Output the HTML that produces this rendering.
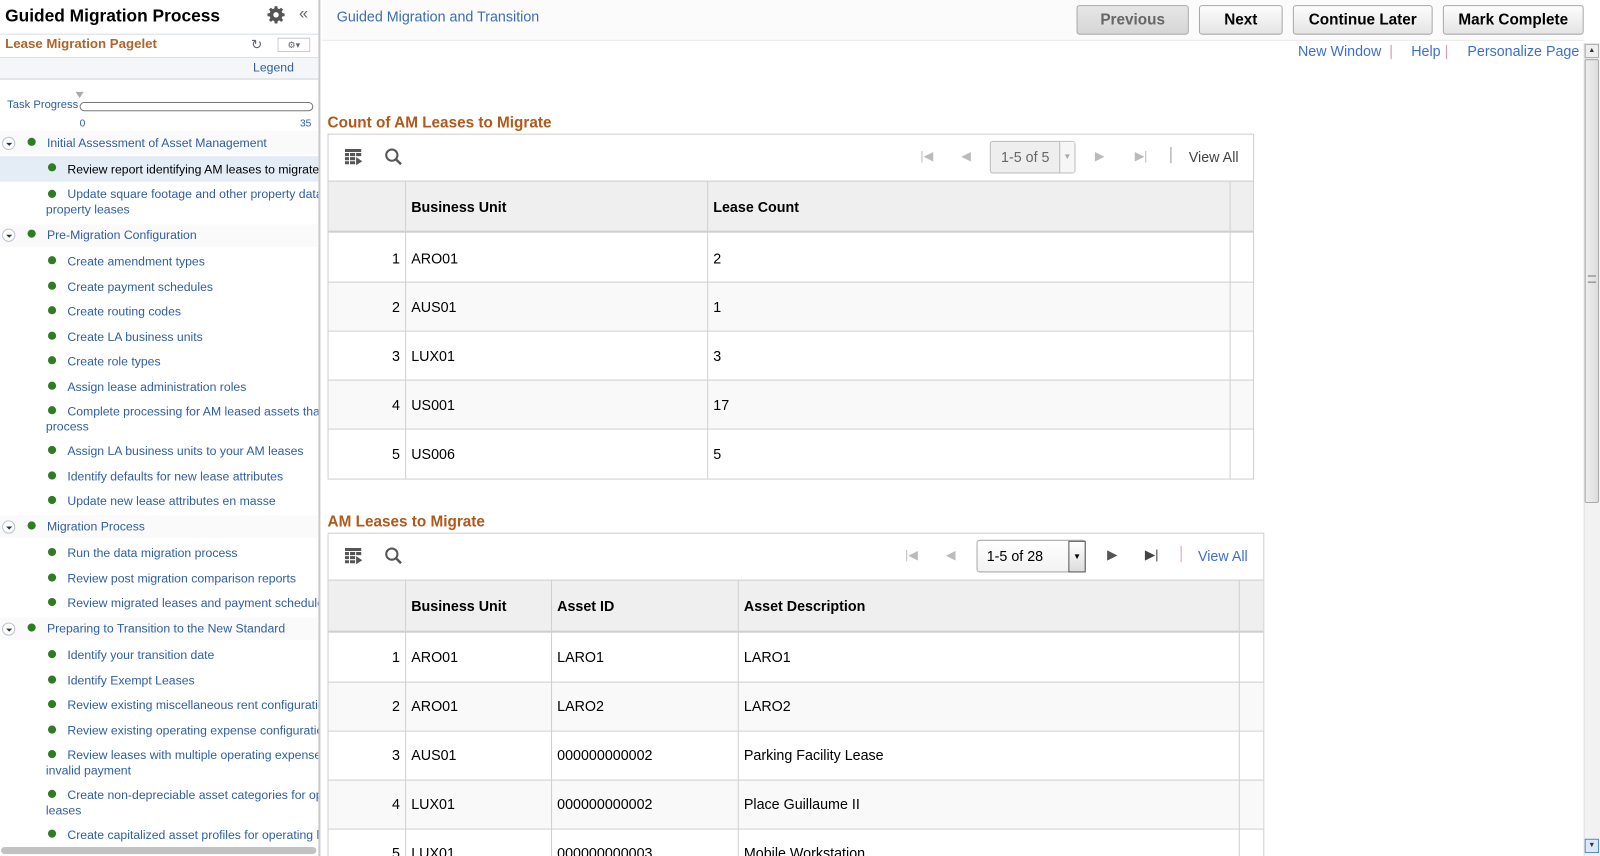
<!DOCTYPE html>
<html><head><meta charset="utf-8"><style>
*{box-sizing:border-box;margin:0;padding:0}
html,body{width:1600px;height:856px;overflow:hidden;background:#fff;font-family:"Liberation Sans",Arial,sans-serif}
#w{position:absolute;left:0;top:0;width:1568px;height:839px;transform:scale(1.020408);transform-origin:0 0;overflow:hidden}
.a{position:absolute;white-space:nowrap}
#left{position:absolute;left:0;top:0;width:314px;height:839px;border-right:2px solid #c9c9c9;overflow:hidden}
.it{position:absolute;left:0;width:312px;font-size:12px;color:#2e5ea7;line-height:15px}
.dot{position:absolute;width:8px;height:8px;border-radius:50%;background:#2e7d22}
.tg{position:absolute;left:2px;width:13px;height:13px;border:1px solid #b9c3d0;border-radius:50%;background:#fff}
.tg:after{content:"";position:absolute;left:3px;top:5px;border-left:3px solid transparent;border-right:3px solid transparent;border-top:3px solid #333}
.btn{position:absolute;top:5px;height:29px;border:1px solid #a8a8a8;border-radius:3px;background:linear-gradient(#fdfdfd,#e4e4e4);font-weight:bold;font-size:15px;text-align:center;line-height:27px;color:#000}
.lnk{color:#3d6ed6;font-size:14px}
.tb{position:absolute;border:1px solid #cfcfcf;background:#fff}
.cell{position:absolute;font-size:14px;color:#000}
.hl{position:absolute;background:#d0d0d0}
</style></head><body><div id="w">
<div id="left">
 <div class="a" style="left:5px;top:6px;font-size:17px;font-weight:bold;color:#000">Guided Migration Process</div>
 <svg class="a" style="left:262px;top:6px" width="17" height="17" viewBox="0 0 16 16"><path fill="#555" d="M6.8 0h2.4l.4 2.2 1.4.6 1.8-1.3 1.7 1.7-1.3 1.8.6 1.4 2.2.4v2.4l-2.2.4-.6 1.4 1.3 1.8-1.7 1.7-1.8-1.3-1.4.6-.4 2.2H6.8l-.4-2.2-1.4-.6-1.8 1.3-1.7-1.7 1.3-1.8-.6-1.4L0 9.2V6.8l2.2-.4.6-1.4-1.3-1.8 1.7-1.7 1.8 1.3 1.4-.6z"/><circle cx="8" cy="8" r="2.5" fill="#fff"/></svg>
 <div class="a" style="left:293px;top:5px;font-size:16px;color:#666">«</div>
 <div class="a" style="left:0;top:33px;width:312px;height:24px;border-top:1px solid #d6dde6;border-bottom:1px solid #d6dde6"></div>
 <div class="a" style="left:5px;top:35px;font-size:13px;font-weight:bold;color:#b1642a">Lease Migration Pagelet</div>
 <div class="a" style="left:246px;top:36px;font-size:13px;color:#667">&#x21bb;</div>
 <div class="a" style="left:272px;top:37px;width:32px;height:14px;border:1px solid #ccc;font-size:9px;color:#666;text-align:center;line-height:12px">⚙▾</div>
 <div class="a" style="left:0;top:57px;width:312px;height:21px;background:#f4f6f9;border-bottom:1px solid #cfd3d8"></div>
 <div class="a" style="left:248px;top:59px;font-size:12px;color:#2e5ea7">Legend</div>
 <div class="a" style="left:74px;top:90px;border-left:4px solid transparent;border-right:4px solid transparent;border-top:6px solid #aaa"></div>
 <div class="a" style="left:7px;top:97px;font-size:11px;color:#2e5ea7">Task Progress</div>
 <div class="a" style="left:78px;top:100px;width:229px;height:9px;border:1px solid #777;border-radius:5px"></div>
 <div class="a" style="left:78px;top:116px;font-size:10px;color:#2e5ea7">0</div>
 <div class="a" style="left:294px;top:116px;font-size:10px;color:#2e5ea7">35</div>
 <div class="a" style="left:0;top:129px;width:312px;border-top:1px solid #ddd"></div>
 <div class="it" style="top:129px;height:22px;background:#fafafa"><div class="tg" style="top:5px"></div><div class="dot" style="left:27px;top:6px"></div><span class="a" style="left:46px;top:4px">Initial Assessment of Asset Management</span></div>
 <div class="it" style="top:153px;height:25px;background:#e4ecf6"><div class="dot" style="left:47px;top:7px"></div><span class="a" style="left:66px;top:6px;color:#000">Review report identifying AM leases to migrate</span></div>
 <div class="it" style="top:182px"><div class="dot" style="left:47px;top:4px"></div><span class="a" style="left:66px;top:1px">Update square footage and other property data</span><span class="a" style="left:45px;top:16px">property leases</span></div>
 <div class="it" style="top:220px;height:22px;background:#fafafa"><div class="tg" style="top:4px"></div><div class="dot" style="left:27px;top:5px"></div><span class="a" style="left:46px;top:3px">Pre-Migration Configuration</span></div>
 <div class="it" style="top:249px"><div class="dot" style="left:47px;top:2px"></div><span class="a" style="left:66px;top:0">Create amendment types</span></div>
 <div class="it" style="top:274px"><div class="dot" style="left:47px;top:2px"></div><span class="a" style="left:66px;top:0">Create payment schedules</span></div>
 <div class="it" style="top:298px"><div class="dot" style="left:47px;top:2px"></div><span class="a" style="left:66px;top:0">Create routing codes</span></div>
 <div class="it" style="top:323px"><div class="dot" style="left:47px;top:2px"></div><span class="a" style="left:66px;top:0">Create LA business units</span></div>
 <div class="it" style="top:347px"><div class="dot" style="left:47px;top:2px"></div><span class="a" style="left:66px;top:0">Create role types</span></div>
 <div class="it" style="top:372px"><div class="dot" style="left:47px;top:2px"></div><span class="a" style="left:66px;top:0">Assign lease administration roles</span></div>
 <div class="it" style="top:396px"><div class="dot" style="left:47px;top:2px"></div><span class="a" style="left:66px;top:0">Complete processing for AM leased assets that</span><span class="a" style="left:45px;top:15px">process</span></div>
 <div class="it" style="top:435px"><div class="dot" style="left:47px;top:2px"></div><span class="a" style="left:66px;top:0">Assign LA business units to your AM leases</span></div>
 <div class="it" style="top:460px"><div class="dot" style="left:47px;top:2px"></div><span class="a" style="left:66px;top:0">Identify defaults for new lease attributes</span></div>
 <div class="it" style="top:484px"><div class="dot" style="left:47px;top:2px"></div><span class="a" style="left:66px;top:0">Update new lease attributes en masse</span></div>
 <div class="it" style="top:505px;height:22px;background:#fafafa"><div class="tg" style="top:5px"></div><div class="dot" style="left:27px;top:6px"></div><span class="a" style="left:46px;top:4px">Migration Process</span></div>
 <div class="it" style="top:535px"><div class="dot" style="left:47px;top:2px"></div><span class="a" style="left:66px;top:0">Run the data migration process</span></div>
 <div class="it" style="top:560px"><div class="dot" style="left:47px;top:2px"></div><span class="a" style="left:66px;top:0">Review post migration comparison reports</span></div>
 <div class="it" style="top:584px"><div class="dot" style="left:47px;top:2px"></div><span class="a" style="left:66px;top:0">Review migrated leases and payment schedules</span></div>
 <div class="it" style="top:605px;height:22px;background:#fafafa"><div class="tg" style="top:5px"></div><div class="dot" style="left:27px;top:6px"></div><span class="a" style="left:46px;top:4px">Preparing to Transition to the New Standard</span></div>
 <div class="it" style="top:635px"><div class="dot" style="left:47px;top:2px"></div><span class="a" style="left:66px;top:0">Identify your transition date</span></div>
 <div class="it" style="top:660px"><div class="dot" style="left:47px;top:2px"></div><span class="a" style="left:66px;top:0">Identify Exempt Leases</span></div>
 <div class="it" style="top:684px"><div class="dot" style="left:47px;top:2px"></div><span class="a" style="left:66px;top:0">Review existing miscellaneous rent configuration</span></div>
 <div class="it" style="top:709px"><div class="dot" style="left:47px;top:2px"></div><span class="a" style="left:66px;top:0">Review existing operating expense configuration</span></div>
 <div class="it" style="top:733px"><div class="dot" style="left:47px;top:2px"></div><span class="a" style="left:66px;top:0">Review leases with multiple operating expense</span><span class="a" style="left:45px;top:15px">invalid payment</span></div>
 <div class="it" style="top:772px"><div class="dot" style="left:47px;top:2px"></div><span class="a" style="left:66px;top:0">Create non-depreciable asset categories for op</span><span class="a" style="left:45px;top:15px">leases</span></div>
 <div class="it" style="top:811px"><div class="dot" style="left:47px;top:2px"></div><span class="a" style="left:66px;top:0">Create capitalized asset profiles for operating le</span></div>
 <div class="a" style="left:1px;top:830px;width:309px;height:7px;border-radius:4px;background:#c2c2c2"></div>
</div>

<div class="a" style="left:316px;top:0;width:1236px;height:40px;background:#fbfbfb;border-bottom:1px solid #e8e8e8"></div>
<div class="a" style="left:330px;top:8px;font-size:14px;color:#3a6db5">Guided Migration and Transition</div>
<div class="btn" style="left:1055px;width:110px;color:#666;background:linear-gradient(#e6e6e6,#d6d6d6)">Previous</div>
<div class="btn" style="left:1175px;width:82px">Next</div>
<div class="btn" style="left:1267px;width:137px">Continue Later</div>
<div class="btn" style="left:1414px;width:138px">Mark Complete</div>
<div class="a lnk" style="left:1272px;top:42px">New Window <span style="color:#d9a">&nbsp;|</span></div>
<div class="a lnk" style="left:1383px;top:42px">Help <span style="color:#d9a">|</span></div>
<div class="a lnk" style="left:1438px;top:42px">Personalize Page</div>
<div class="a" style="left:1552px;top:42px;width:16px;height:797px;background:#f2f2f2;border-left:1px solid #ddd"></div>
<div class="a" style="left:1553px;top:43px;width:14px;height:14px;border:1px solid #aaa;background:#eee;font-size:7px;text-align:center;line-height:12px;color:#333">▲</div>
<div class="a" style="left:1553px;top:58px;width:14px;height:435px;border:1px solid #aaa;border-radius:2px;background:linear-gradient(90deg,#eee,#ddd)"></div>
<div class="a" style="left:1556px;top:270px;width:8px;height:7px;border-top:1px solid #777;border-bottom:1px solid #777"></div>
<div class="a" style="left:1553px;top:822px;width:14px;height:14px;border:1px solid #5a8ad0;background:#dbe8f8;font-size:7px;text-align:center;line-height:12px;color:#333">▼</div>

<!-- Table 1 -->
<div class="a" style="left:321px;top:112px;font-size:15px;font-weight:bold;color:#b1581a">Count of AM Leases to Migrate</div>
<div class="tb" style="left:321px;top:131px;width:908px;height:339px">
 <svg class="a" style="left:16px;top:14px" width="18" height="16" viewBox="0 0 18 16"><path fill="#555" d="M0 0h16v3H0zM0 4h4v3H0zM5 4h5v3H5zM11 4h5v3h-5zM0 8h4v3H0zM5 8h5v3H5zM0 12h4v3H0zM5 12h5v3H5z"/><path fill="#555" d="M11 8l6 4-6 4z"/></svg>
 <svg class="a" style="left:55px;top:13px" width="18" height="18" viewBox="0 0 18 18"><circle cx="7" cy="7" r="5.5" fill="none" stroke="#555" stroke-width="2"/><path d="M11 11l5 5" stroke="#555" stroke-width="2.4"/></svg>
 <div class="a" style="left:580px;top:14px;color:#bbb;font-size:12px">|◀</div>
 <div class="a" style="left:620px;top:14px;color:#bbb;font-size:12px">◀</div>
 <div class="a" style="left:648px;top:6px;width:84px;height:32px;border:1px solid #bbb;border-radius:3px;background:#eee;font-size:14px;color:#666;line-height:30px;padding-left:10px">1-5 of 5</div>
 <div class="a" style="left:716px;top:7px;width:15px;height:30px;border-left:1px solid #bbb;background:#f6f6f6;font-size:8px;color:#aaa;text-align:center;line-height:30px">▼</div>
 <div class="a" style="left:751px;top:14px;color:#bbb;font-size:12px">▶</div>
 <div class="a" style="left:790px;top:14px;color:#bbb;font-size:12px">▶|</div>
 <div class="a" style="left:825px;top:12px;width:1px;height:16px;background:#999"></div>
 <div class="a" style="left:843px;top:14px;font-size:14px;color:#444">View All</div>
 <div class="a" style="left:0;top:45px;width:906px;height:51px;background:#efefef;border-top:1px solid #cfcfcf;border-bottom:2px solid #cfcfcf"></div>
 <div class="cell" style="left:81px;top:63px;font-weight:bold">Business Unit</div>
 <div class="cell" style="left:377px;top:63px;font-weight:bold">Lease Count</div>
 <div class="a" style="left:0;top:144px;width:906px;height:48px;background:#f9f9f9"></div>
 <div class="a" style="left:0;top:240px;width:906px;height:48px;background:#f9f9f9"></div>
 <div class="hl" style="left:0;top:144px;width:906px;height:1px"></div>
 <div class="hl" style="left:0;top:192px;width:906px;height:1px"></div>
 <div class="hl" style="left:0;top:240px;width:906px;height:1px"></div>
 <div class="hl" style="left:0;top:288px;width:906px;height:1px"></div>
 <div class="hl" style="left:75px;top:45px;width:1px;height:292px"></div>
 <div class="hl" style="left:371px;top:45px;width:1px;height:292px"></div>
 <div class="hl" style="left:883px;top:45px;width:1px;height:292px"></div>
 <div class="cell" style="left:0;width:70px;text-align:right;top:113px">1</div><div class="cell" style="left:81px;top:113px">ARO01</div><div class="cell" style="left:377px;top:113px">2</div>
 <div class="cell" style="left:0;width:70px;text-align:right;top:161px">2</div><div class="cell" style="left:81px;top:161px">AUS01</div><div class="cell" style="left:377px;top:161px">1</div>
 <div class="cell" style="left:0;width:70px;text-align:right;top:209px">3</div><div class="cell" style="left:81px;top:209px">LUX01</div><div class="cell" style="left:377px;top:209px">3</div>
 <div class="cell" style="left:0;width:70px;text-align:right;top:257px">4</div><div class="cell" style="left:81px;top:257px">US001</div><div class="cell" style="left:377px;top:257px">17</div>
 <div class="cell" style="left:0;width:70px;text-align:right;top:305px">5</div><div class="cell" style="left:81px;top:305px">US006</div><div class="cell" style="left:377px;top:305px">5</div>
</div>

<!-- Table 2 -->
<div class="a" style="left:321px;top:503px;font-size:15px;font-weight:bold;color:#b1581a">AM Leases to Migrate</div>
<div class="tb" style="left:321px;top:522px;width:918px;height:340px">
 <svg class="a" style="left:16px;top:14px" width="18" height="16" viewBox="0 0 18 16"><path fill="#555" d="M0 0h16v3H0zM0 4h4v3H0zM5 4h5v3H5zM11 4h5v3h-5zM0 8h4v3H0zM5 8h5v3H5zM0 12h4v3H0zM5 12h5v3H5z"/><path fill="#555" d="M11 8l6 4-6 4z"/></svg>
 <svg class="a" style="left:55px;top:13px" width="18" height="18" viewBox="0 0 18 18"><circle cx="7" cy="7" r="5.5" fill="none" stroke="#555" stroke-width="2"/><path d="M11 11l5 5" stroke="#555" stroke-width="2.4"/></svg>
 <div class="a" style="left:565px;top:14px;color:#bbb;font-size:12px">|◀</div>
 <div class="a" style="left:605px;top:14px;color:#bbb;font-size:12px">◀</div>
 <div class="a" style="left:635px;top:6px;width:107px;height:32px;border:1px solid #aaa;border-radius:3px;background:linear-gradient(#fff,#f2f2f2);font-size:14px;color:#000;line-height:30px;padding-left:9px">1-5 of 28</div>
 <div class="a" style="left:725px;top:7px;width:17px;height:31px;border:1px solid #555;background:linear-gradient(#fff,#ddd);font-size:8px;color:#000;text-align:center;line-height:30px">▼</div>
 <div class="a" style="left:763px;top:13px;color:#555;font-size:13px">▶</div>
 <div class="a" style="left:800px;top:13px;color:#444;font-size:13px">▶|</div>
 <div class="a" style="left:835px;top:12px;width:1px;height:16px;background:#e9a"></div>
 <div class="a" style="left:852px;top:14px;font-size:14px;color:#3d6ed6">View All</div>
 <div class="a" style="left:0;top:45px;width:916px;height:52px;background:#efefef;border-top:1px solid #cfcfcf;border-bottom:2px solid #cfcfcf"></div>
 <div class="cell" style="left:81px;top:63px;font-weight:bold">Business Unit</div>
 <div class="cell" style="left:224px;top:63px;font-weight:bold">Asset ID</div>
 <div class="cell" style="left:407px;top:63px;font-weight:bold">Asset Description</div>
 <div class="a" style="left:0;top:145px;width:916px;height:48px;background:#f9f9f9"></div>
 <div class="a" style="left:0;top:241px;width:916px;height:48px;background:#f9f9f9"></div>
 <div class="hl" style="left:0;top:145px;width:916px;height:1px"></div>
 <div class="hl" style="left:0;top:193px;width:916px;height:1px"></div>
 <div class="hl" style="left:0;top:241px;width:916px;height:1px"></div>
 <div class="hl" style="left:0;top:289px;width:916px;height:1px"></div>
 <div class="hl" style="left:75px;top:45px;width:1px;height:300px"></div>
 <div class="hl" style="left:218px;top:45px;width:1px;height:300px"></div>
 <div class="hl" style="left:401px;top:45px;width:1px;height:300px"></div>
 <div class="hl" style="left:892px;top:45px;width:1px;height:300px"></div>
 <div class="cell" style="left:0;width:70px;text-align:right;top:113px">1</div><div class="cell" style="left:81px;top:113px">ARO01</div><div class="cell" style="left:224px;top:113px">LARO1</div><div class="cell" style="left:407px;top:113px">LARO1</div>
 <div class="cell" style="left:0;width:70px;text-align:right;top:161px">2</div><div class="cell" style="left:81px;top:161px">ARO01</div><div class="cell" style="left:224px;top:161px">LARO2</div><div class="cell" style="left:407px;top:161px">LARO2</div>
 <div class="cell" style="left:0;width:70px;text-align:right;top:209px">3</div><div class="cell" style="left:81px;top:209px">AUS01</div><div class="cell" style="left:224px;top:209px">000000000002</div><div class="cell" style="left:407px;top:209px">Parking Facility Lease</div>
 <div class="cell" style="left:0;width:70px;text-align:right;top:257px">4</div><div class="cell" style="left:81px;top:257px">LUX01</div><div class="cell" style="left:224px;top:257px">000000000002</div><div class="cell" style="left:407px;top:257px">Place Guillaume II</div>
 <div class="cell" style="left:0;width:70px;text-align:right;top:305px">5</div><div class="cell" style="left:81px;top:305px">LUX01</div><div class="cell" style="left:224px;top:305px">000000000003</div><div class="cell" style="left:407px;top:305px">Mobile Workstation</div>
</div>
</div></body></html>
